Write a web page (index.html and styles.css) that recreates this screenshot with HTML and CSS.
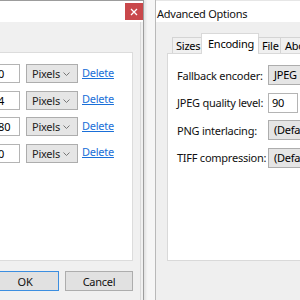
FILE: index.html
```html
<!DOCTYPE html>
<html>
<head>
<meta charset="utf-8">
<link rel="stylesheet" href="styles.css">
</head>
<body>
<div class="desk">
  <div class="win win-left">
    <div class="titlebar">
      <div class="close">
        <svg width="8" height="8" viewBox="0 0 8 8"><path d="M1 1L7 7M7 1L1 7" stroke="#fff" stroke-width="1.3"/></svg>
      </div>
    </div>
    <div class="body-left">
      <div class="group">
        <div class="row">
          <div class="num">640</div>
          <div class="combo"><span>Pixels</span><svg width="7" height="4" viewBox="0 0 7 4"><path d="M0.5 0.5L3.5 3.5L6.5 0.5" fill="none" stroke="#777"/></svg></div>
          <a class="link">Delete</a>
        </div>
        <div class="row">
          <div class="num">384</div>
          <div class="combo"><span>Pixels</span><svg width="7" height="4" viewBox="0 0 7 4"><path d="M0.5 0.5L3.5 3.5L6.5 0.5" fill="none" stroke="#777"/></svg></div>
          <a class="link">Delete</a>
        </div>
        <div class="row">
          <div class="num">1280</div>
          <div class="combo"><span>Pixels</span><svg width="7" height="4" viewBox="0 0 7 4"><path d="M0.5 0.5L3.5 3.5L6.5 0.5" fill="none" stroke="#777"/></svg></div>
          <a class="link">Delete</a>
        </div>
        <div class="row">
          <div class="num">720</div>
          <div class="combo"><span>Pixels</span><svg width="7" height="4" viewBox="0 0 7 4"><path d="M0.5 0.5L3.5 3.5L6.5 0.5" fill="none" stroke="#777"/></svg></div>
          <a class="link">Delete</a>
        </div>
      </div>
      <div class="buttons">
        <div class="btn btn-default">OK</div>
        <div class="btn">Cancel</div>
      </div>
    </div>
  </div>

  <div class="win win-right">
    <div class="titlebar title-right">Advanced Options</div>
    <div class="body-right">
      <div class="tabs">
        <div class="tab tab-sizes">Sizes</div>
        <div class="tab tab-active">Encoding</div>
        <div class="tab tab-file">File</div>
        <div class="tab">About</div>
      </div>
      <div class="panel">
        <div class="prow">
          <div class="plabel">Fallback encoder:</div>
          <div class="pctl pcombo">JPEG Encoder</div>
        </div>
        <div class="prow">
          <div class="plabel">JPEG quality level:</div>
          <div class="pctl pinput">90</div>
        </div>
        <div class="prow">
          <div class="plabel">PNG interlacing:</div>
          <div class="pctl pcombo">(Default)</div>
        </div>
        <div class="prow">
          <div class="plabel">TIFF compression:</div>
          <div class="pctl pcombo">(Default)</div>
        </div>
      </div>
    </div>
  </div>
</div>
</body>
</html>
```
FILE: styles.css
```css
* { box-sizing: border-box; }
html, body { margin: 0; padding: 0; }
body {
  width: 300px;
  height: 300px;
  overflow: hidden;
  background: #f6f6f6;
  font-family: "Noto Sans", "Open Sans", sans-serif;
  font-size: 11px;
  letter-spacing: -0.25px;
  color: #000;
}
.desk { position: relative; width: 300px; height: 300px; overflow: hidden; }

.win { position: absolute; top: 0; }
.win-left {
  left: -60px;
  width: 204px;
  height: 320px;
  border: 1px solid #9c9c9c;
  border-bottom: none;
  background: #f0f0f0;
  box-shadow: 2px 0 2px rgba(0,0,0,0.08);
}
.titlebar {
  height: 21px;
  background: #fff;
  position: relative;
}
.close {
  position: absolute;
  right: 0;
  top: 2px;
  width: 18px;
  height: 17px;
  background: #c9484b;
  display: flex;
  align-items: center;
  justify-content: center;
}
.body-left {
  background: #f0f0f0;
  margin-right: 2px;
  border-right: 1px solid #dadada;
  height: 300px;
  padding: 30px 7px 0 9px;
  display: flex;
  flex-direction: column;
}
.group {
  background: #fff;
  border: 1px solid #dcdcdc;
  height: 209px;
  padding: 11px 0 0 8px;
  display: flex;
  flex-direction: column;
  gap: 7.67px;
}
.row { display: flex; align-items: center; height: 19px; }
.num {
  width: 61px;
  height: 19px;
  border: 1px solid #b4b4b4;
  background: #fff;
  padding-left: 26px;
  line-height: 17px;
  white-space: nowrap;
  overflow: hidden;
}
.combo {
  margin-left: 6px;
  width: 52px;
  height: 19px;
  border: 1px solid #adadad;
  background: #e5e5e5;
  display: flex;
  align-items: center;
  justify-content: space-between;
  padding: 0 7px 0 5px;
  color: #222;
}
.combo span { line-height: 17px; }
.combo svg { margin-top: 1px; }
.link {
  margin-left: 4px;
  color: #1a6fd8;
  text-decoration: underline;
  line-height: 17px;
  margin-top: -3px;
}
.buttons {
  display: flex;
  justify-content: flex-end;
  gap: 6px;
  margin-top: 10px;
}
.btn {
  width: 68px;
  flex: none;
  height: 20px;
  border: 1px solid #adadad;
  background: #e1e1e1;
  display: flex;
  align-items: center;
  justify-content: center;
  color: #111;
}
.btn-default { border-color: #3c8ee0; }

.win-right {
  left: 155px;
  width: 160px;
  height: 320px;
  border-left: 1px solid #b9b9b9;
  background: #efefef;
}
.title-right {
  padding-left: 1px;
  line-height: 25px;
  height: 22px;
  color: #111;
  border-top: 1px solid #e6e6e6;
}
.body-right {
  padding: 11px 0 0 11px;
}
.tabs {
  display: flex;
  align-items: flex-end;
  padding-left: 5px;
  height: 20px;
  position: relative;
  z-index: 1;
}
.tab {
  height: 16px;
  border: 1px solid #d4d4d4;
  border-bottom: none;
  background: #f0f0f0;
  padding: 0 4px;
  line-height: 15px;
  white-space: nowrap;
  margin-right: -1px;
  flex: none;
}
.tab-sizes { width: 30px; padding: 0 0 0 3px; }
.tab-file { width: 23px; padding: 0 0 0 3px; }
.tab-active {
  width: 58px;
  height: 21px;
  background: #fff;
  line-height: 20px;
  padding: 0 0 0 6px;
  margin-bottom: -1px;
  border-color: #d9d9d9;
}
.panel {
  background: #fff;
  border: 1px solid #d9d9d9;
  border-right: none;
  height: 208px;
  padding: 11px 0 0 9px;
  display: flex;
  flex-direction: column;
  gap: 7.5px;
}
.prow { display: flex; align-items: center; height: 20px; }
.plabel { width: 91px; flex: none; color: #111; white-space: nowrap; }
.pctl {
  height: 20px;
  line-height: 17px;
  padding-left: 5px;
  white-space: nowrap;
  overflow: hidden;
  flex: none;
}
.pcombo {
  width: 80px;
  border: 1px solid #adadad;
  background: #e5e5e5;
}
.pinput {
  width: 30px;
  border: 1px solid #b4b4b4;
  background: #fff;
  padding-left: 3px;
}
```
